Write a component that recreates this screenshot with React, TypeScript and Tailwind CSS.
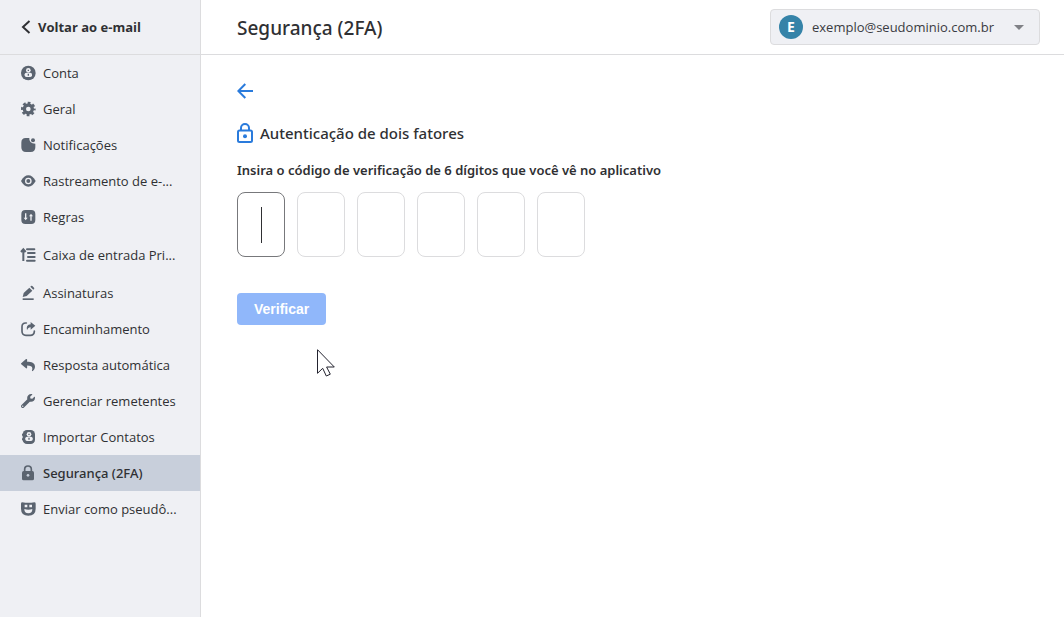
import React, { useState } from "react";
import { FaReply, FaWrench } from "react-icons/fa";

interface IconProps {
  className?: string;
}

interface MenuItem {
  name: string;
  link: string;
  icon: React.ReactNode;
  active?: boolean;
  tall?: boolean;
}

const iconClass = "h-4 w-4 shrink-0 text-[#5b6470]";

const AccountIcon = ({ className }: IconProps) => (
  <svg viewBox="0 0 48 48" className={className} fill="currentColor">
    <circle cx="25" cy="24" r="22" />
    <circle cx="25" cy="16" r="7" className="fill-[#eff0f4]" />
    <rect x="14" y="23" width="22" height="13" rx="5" className="fill-[#eff0f4]" />
    <path d="M25 14v4M25 26v6" stroke="currentColor" strokeWidth="4" />
  </svg>
);

const GearIcon = ({ className }: IconProps) => (
  <svg viewBox="0 0 48 48" className={className} fill="none" stroke="currentColor">
    <circle cx="25" cy="24" r="12" strokeWidth="10" />
    <circle cx="25" cy="24" r="18" strokeWidth="8" strokeDasharray="8 6.137" strokeDashoffset="4" />
  </svg>
);

const BellDotIcon = ({ className }: IconProps) => (
  <svg viewBox="0 0 48 48" className={className} fill="currentColor">
    <path d="M17 3h11q-2 16 18 17v11q0 14-14 14H18Q4 45 4 31V17Q4 3 17 3z" />
    <circle cx="39" cy="10" r="6" />
  </svg>
);

const EyeIcon = ({ className }: IconProps) => (
  <svg viewBox="0 0 48 48" className={className}>
    <path d="M3 24Q12 7 25 7t22 17Q38 41 25 41T3 24z" fill="currentColor" />
    <circle cx="25" cy="24" r="8" fill="none" strokeWidth="4" className="stroke-[#eff0f4]" />
  </svg>
);

const RulesIcon = ({ className }: IconProps) => (
  <svg viewBox="0 0 48 48" className={className}>
    <rect x="4" y="3" width="42" height="42" rx="12" fill="currentColor" />
    <g className="fill-[#eff0f4]">
      <path d="M15 13h4v13h4l-6 8-6-8h4z" />
      <path d="M31 35h4V22h4l-6-8-6 8h4z" />
    </g>
  </svg>
);

const PriorityIcon = ({ className }: IconProps) => (
  <svg viewBox="0 0 48 48" className={className} fill="none" stroke="currentColor" strokeWidth="6">
    <path d="M10 42V9M3 15l7-8 7 8" />
    <path d="M21 7h22M24 18h20M24 30h20M21 41h23" strokeLinecap="round" />
  </svg>
);

const PenIcon = ({ className }: IconProps) => (
  <svg viewBox="0 0 48 48" className={className} fill="currentColor">
    <path d="M8 36l3-12L28 8l9 9-17 16z" />
    <path d="M31 5l2-2q2-2 4 0l5 5q2 2 0 4l-2 2z" />
    <path d="M8 40h33v5H8z" />
  </svg>
);

const ForwardIcon = ({ className }: IconProps) => (
  <svg viewBox="0 0 48 48" className={className}>
    <path
      d="M19 6h-2Q6 6 6 17v14q0 12 12 12h13q11 0 12-11v-2"
      fill="none"
      stroke="currentColor"
      strokeWidth="5"
      strokeLinecap="round"
    />
    <path d="M32 3l14 11-14 12v-7q-8 0-11 9-4-17 11-18z" fill="currentColor" />
  </svg>
);

const ContactsIcon = ({ className }: IconProps) => (
  <svg viewBox="0 0 48 48" className={className} fill="currentColor">
    <rect x="8" y="3" width="37" height="42" rx="13" />
    <path d="M6 14h5v6H6zM6 28h5v6H6z" />
    <circle cx="27" cy="16" r="7" className="fill-[#eff0f4]" />
    <rect x="16" y="23" width="22" height="13" rx="5" className="fill-[#eff0f4]" />
    <path d="M27 14v4M27 26v6" stroke="currentColor" strokeWidth="4" />
  </svg>
);

const LockSolidIcon = ({ className }: IconProps) => (
  <svg viewBox="0 0 48 48" className={className}>
    <rect x="6" y="18" width="36" height="28" rx="5" fill="currentColor" />
    <path d="M14 19v-6q0-10 10-10t10 10v6" fill="none" stroke="currentColor" strokeWidth="5" />
    <circle cx="24" cy="31" r="4" className="fill-[#c8cfdb]" />
  </svg>
);

const MaskIcon = ({ className }: IconProps) => (
  <svg viewBox="0 0 48 48" className={className}>
    <path d="M3 8q0-4 4-4 18 3 36 0 4 0 4 4v15q0 21-22 21T3 23z" fill="currentColor" />
    <path d="M14 15h8M28 15h8" strokeWidth="7" className="stroke-[#eff0f4]" />
    <path d="M13 24q12 5 24 0 0 13-12 13T13 24z" className="fill-[#eff0f4]" />
  </svg>
);

const items: MenuItem[] = [
  { name: "Conta", link: "#conta", icon: <AccountIcon className={iconClass} /> },
  { name: "Geral", link: "#geral", icon: <GearIcon className={iconClass} /> },
  { name: "Notificações", link: "#notificacoes", icon: <BellDotIcon className={iconClass} /> },
  { name: "Rastreamento de e-...", link: "#rastreamento", icon: <EyeIcon className={iconClass} /> },
  { name: "Regras", link: "#regras", icon: <RulesIcon className={iconClass} /> },
  {
    name: "Caixa de entrada Pri...",
    link: "#prioritaria",
    icon: <PriorityIcon className={iconClass} />,
    tall: true,
  },
  { name: "Assinaturas", link: "#assinaturas", icon: <PenIcon className={iconClass} /> },
  { name: "Encaminhamento", link: "#encaminhamento", icon: <ForwardIcon className={iconClass} /> },
  { name: "Resposta automática", link: "#resposta", icon: <FaReply className={iconClass + " p-px"} /> },
  { name: "Gerenciar remetentes", link: "#remetentes", icon: <FaWrench className={iconClass + " p-px"} /> },
  { name: "Importar Contatos", link: "#contatos", icon: <ContactsIcon className={iconClass} /> },
  {
    name: "Segurança (2FA)",
    link: "#seguranca",
    icon: <LockSolidIcon className={iconClass} />,
    active: true,
  },
  { name: "Enviar como pseudô...", link: "#pseudonimo", icon: <MaskIcon className={iconClass} /> },
];

const Sidebar = () => (
  <aside className="w-[201px] shrink-0 border-r border-[#dcdcde] bg-[#eff0f4]">
    <div className="flex h-[55px] items-center border-b border-[#dcdcde] px-5">
      <a href="#email" className="flex items-center gap-1 text-[13px] font-bold text-[#2f3033]">
        <svg viewBox="0 0 14 16" className="h-4 w-3.5" fill="none" stroke="currentColor" strokeWidth="2">
          <path d="M9.5 2L3 8l6.500 6" />
        </svg>
        <span className="pt-0.5">Voltar ao e-mail</span>
      </a>
    </div>
    <nav>
      {items.map((item) => (
        <a
          key={item.link}
          href={item.link}
          className={
            "flex items-center gap-[7px] pl-5 text-[13px] whitespace-nowrap text-[#2f3033] " +
            (item.tall ? "h-10 " : "h-9 ") +
            (item.active ? "bg-[#c8cfdb] font-['Noto_Sans',sans-serif] font-medium" : "")
          }
        >
          {item.icon}
          <span className="pt-0.5">{item.name}</span>
        </a>
      ))}
    </nav>
  </aside>
);

const AccountSelect = () => (
  <label className="relative flex h-9 w-[270px] items-center rounded border border-[#dcdcde] bg-[#eff0f4] pl-2">
    <span className="flex h-6 w-6 items-center justify-center rounded-full bg-[#3583a8] text-sm font-bold text-white">
      E
    </span>
    <select
      aria-label="Conta de e-mail"
      className="h-full flex-1 appearance-none bg-transparent pt-0.5 pl-[9px] text-[13px] text-[#3a3b42] outline-none"
    >
      <option>exemplo@seudominio.com.br</option>
    </select>
    <svg viewBox="0 0 10 5" className="pointer-events-none absolute right-[15px] h-[5px] w-2.5 fill-[#808186]">
      <path d="M0 0h10L5 5z" />
    </svg>
  </label>
);

const CodeInput = () => {
  const [code, setCode] = useState(["", "", "", "", "", ""]);
  return (
    <div className="mt-3 flex gap-3">
      {code.map((digit, index) => (
        <div key={index} className="relative flex items-center justify-center">
          <input
            type="text"
            inputMode="numeric"
            maxLength={1}
            aria-label={"Dígito " + (index + 1)}
            value={digit}
            onChange={(e) => setCode(code.map((d, i) => (i === index ? e.target.value : d)))}
            className={
              "h-[65px] w-12 rounded-lg border bg-white text-center text-3xl text-[#2f3033] outline-none " +
              (index === 0 ? "border-[#77787b]" : "border-[#dcdcde]")
            }
          />
          {index === 0 && digit === "" && (
            <span className="pointer-events-none absolute h-9 w-px bg-[#2f3033]" />
          )}
        </div>
      ))}
    </div>
  );
};

const App = () => {
  return (
    <div className="flex min-h-screen bg-white font-['Open_Sans',sans-serif] text-[#2f3033]">
      <Sidebar />
      <div className="min-w-0 flex-1">
        <header className="flex h-[55px] items-center justify-between border-b border-[#dcdcde] pr-6 pl-9">
          <h1 className="pt-0.5 font-['Noto_Sans',sans-serif] text-[19px] font-medium">Segurança (2FA)</h1>
          <AccountSelect />
        </header>
        <main className="relative px-9 pt-7">
          <a href="#voltar" aria-label="Voltar" className="block w-4 text-[#2a7bdc]">
            <svg viewBox="0 0 16 16" className="h-4 w-4" fill="none" stroke="currentColor" strokeWidth="2">
              <path d="M16 8H1.500M8.300 1L1.300 8l7 7" />
            </svg>
          </a>
          <h2 className="mt-6 flex h-5 items-center gap-[7px] font-['Noto_Sans',sans-serif] text-[15px] font-medium">
            <svg viewBox="0 0 16 20" className="h-5 w-4 text-[#2a7bdc]" fill="none" stroke="currentColor" strokeWidth="2">
              <rect x="1" y="7.500" width="14" height="11.500" rx="1.500" />
              <path d="M4 7V5a4 4 0 0 1 8 0v2" />
              <circle cx="8" cy="13.300" r="2" fill="currentColor" stroke="none" />
            </svg>
            Autenticação de dois fatores
          </h2>
          <p className="mt-[17px] font-['Noto_Sans',sans-serif] text-[13px] leading-5 font-semibold">
            Insira o código de verificação de 6 dígitos que você vê no aplicativo
          </p>
          <CodeInput />
          <button
            type="button"
            className="mt-9 h-8 rounded bg-[#90b7fa] px-[17px] font-['Liberation_Sans',sans-serif] text-sm font-bold text-white"
          >
            Verificar
          </button>
          {/* mouse pointer */}
          <svg
            viewBox="0 0 19 28"
            className="pointer-events-none absolute top-[294px] left-[116px] h-7 w-[19px]"
            fill="white"
            stroke="#23232f"
          >
            <path d="M.5.7v23.600l5.200-5 3.600 7.700 4-1.800-3.700-7.200h7.700z" />
          </svg>
        </main>
      </div>
    </div>
  );
};

export default App;
